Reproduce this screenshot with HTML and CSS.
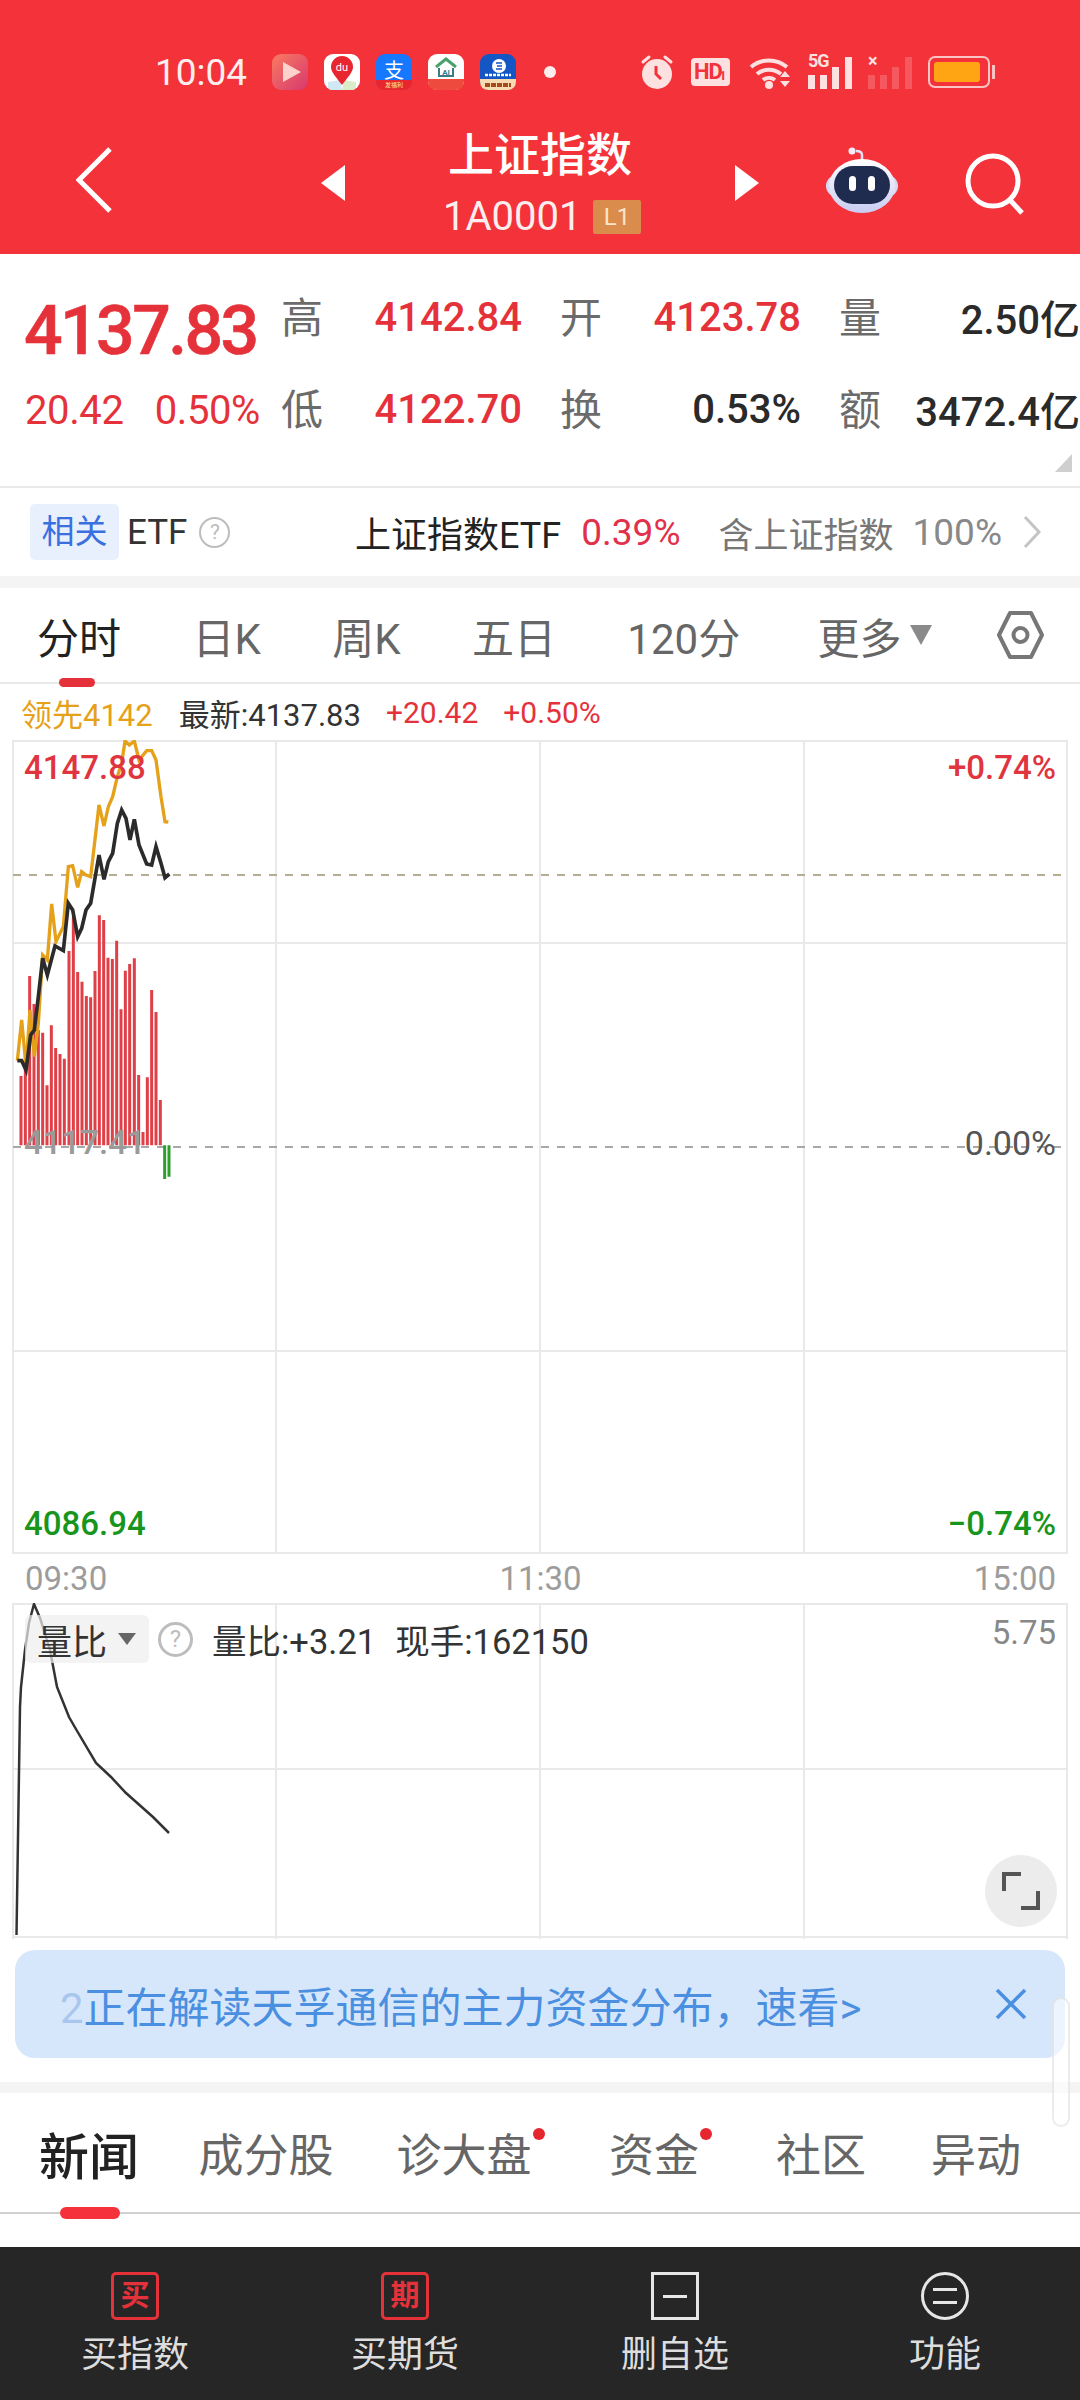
FILE: index.html
```html
<!DOCTYPE html>
<html lang="zh-CN">
<head>
    <meta charset="UTF-8">
    <meta name="viewport" content="width=device-width, initial-scale=1.0">
    <title>上证指数</title>
    <link rel="stylesheet" href="styles.css">
</head>
<body>
<div class="page">
    <header class="top">
        <div class="status">
            <span class="clock">10:04</span>
            <div class="apps">
                <svg width="36" height="36" viewBox="0 0 36 36"><defs><linearGradient id="pl" x1="0" y1="0" x2="1" y2="1"><stop offset="0" stop-color="#f97a62"/><stop offset="1" stop-color="#d8386e"/></linearGradient></defs><rect width="36" height="36" rx="9" fill="url(#pl)"/><path d="M11 8 L29 18 L11 28 Z" fill="#fbd3cc"/></svg>
                <svg width="36" height="36" viewBox="0 0 36 36"><rect width="36" height="36" rx="9" fill="#fff"/><path d="M4 28 L16 26 L18 36 L8 36 Q4 36 4 32 Z" fill="#cfe8f3"/><path d="M32 28 L20 26 L18 36 L28 36 Q32 36 32 32 Z" fill="#d9edc8"/><path d="M18 31 C12 23 7 18 7 13 A11 11 0 0 1 29 13 C29 18 24 23 18 31 Z" fill="#e8262f"/><text x="18" y="17" class="app-du">du</text></svg>
                <svg width="36" height="36" viewBox="0 0 36 36"><rect width="36" height="36" rx="9" fill="#1677ff"/><path d="M0 26 H36 V27 Q36 36 27 36 H9 Q0 36 0 27 Z" fill="#e8262f"/><text x="18" y="24" class="app-zhi">支</text><text x="18" y="33" class="app-tiny">发福利</text></svg>
                <svg width="36" height="36" viewBox="0 0 36 36"><rect width="36" height="36" rx="9" fill="#fff"/><path d="M0 25 H36 V27 Q36 36 27 36 H9 Q0 36 0 27 Z" fill="#ee4a3e"/><path d="M8 13 L18 5 L28 13" fill="none" stroke="#4aa26c" stroke-width="3"/><path d="M11 14 V22 H25 V14" fill="none" stroke="#3a7d88" stroke-width="2"/><text x="18" y="21" class="app-ai">AI</text></svg>
                <svg width="36" height="36" viewBox="0 0 36 36"><rect width="36" height="36" rx="9" fill="#1356c4"/><path d="M0 25 H36 V27 Q36 36 27 36 H9 Q0 36 0 27 Z" fill="#f6dcb0"/><circle cx="19" cy="12" r="7" fill="#fff"/><path d="M16 9 H22 M17 12 H22 M16 15 H22" stroke="#1356c4" stroke-width="1.5"/><path d="M5 21 H31" stroke="#fff" stroke-width="2.5" stroke-dasharray="3 1"/><path d="M5 31 H31" stroke="#a34a20" stroke-width="4" stroke-dasharray="5 1"/></svg>
            </div>
            <span class="note-dot"></span>
            <div class="sys">
                <svg class="sys-alarm" width="34" height="36" viewBox="0 0 34 36"><path d="M3 8 L9 3 M31 8 L25 3" stroke="#fde0e0" stroke-width="3" stroke-linecap="round"/><circle cx="17" cy="20" r="15" fill="#fde0e0"/><path d="M16 12 V20 L21 25" fill="none" stroke="#f4323b" stroke-width="3"/></svg>
                <svg class="sys-hd" width="39" height="28" viewBox="0 0 39 28"><rect width="39" height="28" rx="4" fill="#fde0e0"/><text x="3" y="21" class="sys-hd-text">HD</text><text x="28" y="22" class="sys-hd-sub">1</text></svg>
                <svg class="sys-wifi" width="46" height="34" viewBox="0 0 46 34"><path d="M2 12 A28 28 0 0 1 38 12 M8 19 A19 19 0 0 1 32 19 M14 25 A10 10 0 0 1 26 25" fill="none" stroke="#fde0e0" stroke-width="4"/><circle cx="20" cy="30" r="4" fill="#fde0e0"/><path d="M31 22 L36 16 L41 22 Z M31 26 L41 26 L36 32 Z" fill="#fde0e0"/></svg>
                <div class="sig">
                    <span class="sig-tag">5G</span>
                    <svg width="46" height="34" viewBox="0 0 46 34"><path d="M0 20 h7 v14 h-7 Z M12 20 h7 v14 h-7 Z M24 12 h7 v22 h-7 Z M37 2 h7 v32 h-7 Z" fill="#fde0e0"/></svg>
                </div>
                <div class="sig sig-off">
                    <span class="sig-tag">×</span>
                    <svg width="46" height="34" viewBox="0 0 46 34"><path d="M0 20 h7 v14 h-7 Z M12 20 h7 v14 h-7 Z M24 12 h7 v22 h-7 Z M37 2 h7 v32 h-7 Z" fill="#fde0e0"/></svg>
                </div>
                <div class="battery"><span class="battery-fill"></span></div>
            </div>
        </div>
        <nav class="nav">
            <svg class="nav-back" width="36" height="66" viewBox="0 0 36 66"><path d="M34 2 L3 33 L34 64" fill="none" stroke="#fff" stroke-width="5"/></svg>
            <span class="tri tri-left"></span>
            <div class="nav-title">
                <div class="name">上证指数</div>
                <div class="code">1A0001<span class="level">L1</span></div>
            </div>
            <span class="tri tri-right"></span>
            <svg class="nav-robot" width="72" height="66" viewBox="0 0 72 66"><defs><linearGradient id="rb" x1="0" y1="0" x2="0" y2="1"><stop offset="0" stop-color="#fff"/><stop offset="1" stop-color="#c9ccf2"/></linearGradient></defs><path d="M36 14 V8 Q36 4 30 4" fill="none" stroke="#e6e0f5" stroke-width="2.5"/><circle cx="26" cy="4" r="3.5" fill="#f3eef8"/><rect x="0" y="28" width="72" height="22" rx="11" fill="#d7d9f5"/><ellipse cx="36" cy="39" rx="33" ry="27" fill="url(#rb)"/><rect x="8" y="19" width="56" height="38" rx="19" fill="#1f2c50"/><rect x="23" y="29" width="7" height="15" rx="3.5" fill="#fff"/><rect x="42" y="29" width="7" height="15" rx="3.5" fill="#fff"/></svg>
            <svg class="nav-search" width="62" height="62" viewBox="0 0 62 62"><circle cx="28" cy="28" r="25" fill="none" stroke="#fff" stroke-width="5"/><path d="M45 47 L57 60" stroke="#fff" stroke-width="5"/></svg>
        </nav>
    </header>

    <section class="quote">
        <div class="quote-main">
            <div class="price">4137.83</div>
            <div class="change"><span>20.42</span><span>0.50%</span></div>
        </div>
        <div class="stats">
            <div class="stat"><span class="stat-key">高</span><span class="up">4142.84</span></div>
            <div class="stat"><span class="stat-key">开</span><span class="up">4123.78</span></div>
            <div class="stat"><span class="stat-key">量</span><span>2.50亿</span></div>
            <div class="stat"><span class="stat-key">低</span><span class="up">4122.70</span></div>
            <div class="stat"><span class="stat-key">换</span><span>0.53%</span></div>
            <div class="stat"><span class="stat-key">额</span><span>3472.4亿</span></div>
        </div>
        <span class="corner"></span>
    </section>

    <section class="etf">
        <span class="etf-chip">相关</span>
        <span class="etf-label">ETF</span>
        <span class="help">?</span>
        <span class="etf-name">上证指数ETF</span>
        <span class="etf-pct">0.39%</span>
        <span class="etf-note">含上证指数</span>
        <span class="etf-share">100%</span>
        <svg width="20" height="34" viewBox="0 0 20 34"><path d="M3 2 L17 17 L3 32" fill="none" stroke="#c4c4c4" stroke-width="3"/></svg>
    </section>

    <div class="band"></div>

    <div class="periods">
        <span class="period period-on">分时</span>
        <span class="period">日K</span>
        <span class="period">周K</span>
        <span class="period">五日</span>
        <span class="period">120分</span>
        <span class="period period-more">更多<i class="more-arrow"></i></span>
        <svg width="47" height="50" viewBox="0 0 47 50"><path d="M13 3 H34 L45 25 L34 47 H13 L2 25 Z" fill="none" stroke="#777" stroke-width="4" stroke-linejoin="round"/><circle cx="23.5" cy="25" r="7" fill="none" stroke="#777" stroke-width="4"/></svg>
    </div>

    <div class="legend">
        <span class="legend-lead">领先4142</span>
        <span class="legend-last">最新:4137.83</span>
        <span class="legend-up">+20.42</span>
        <span class="legend-up">+0.50%</span>
    </div>

    <section class="chart">
        <svg class="plot" width="1080" height="814" viewBox="0 0 1080 814">
            <path class="grid" d="M13 1 H1067 M13 203 H1067 M13 611 H1067 M13 813 H1067 M13 0 V814 M276 0 V814 M540 0 V814 M804 0 V814 M1067 0 V814"/>
            <path class="dash-tan" d="M13 135 H1067"/>
            <path class="dash-gray" d="M13 407 H1067"/>
            <g transform="translate(0,-50) scale(.33333)">
                <path class="bars-up" d="M63 1158V1366M76 1130V1366M89 858V1366M102 942V1366M115 1020V1366M128 1028V1366M141 1186V1366M154 1006V1366M167 1074V1366M180 1092V1366M193 1106V1366M207 783V1366M220 680V1366M233 846V1366M246 875V1366M259 918V1366M272 922V1366M285 843V1366M298 676V1366M311 690V1366M324 803V1366M337 807V1366M350 752V1366M363 958V1366M376 842V1366M389 822V1366M403 805V1366M416 1155V1366M429 1326V1366M442 1162V1366M455 900V1366M468 966V1366M481 1230V1366"/>
                <path class="bars-down" d="M494 1366V1467M507 1366V1460"/>
                <polyline class="line-lead" points="52,1112 65,990 78,1130 90,960 103,1100 115,1000 128,795 142,810 155,642 168,755 190,710 205,530 218,527 233,592 245,545 258,555 272,560 297,345 312,408 325,350 338,320 352,260 365,220 375,153 388,165 403,153 417,210 440,182 455,182 468,210 483,320 495,395 505,396"/>
                <polyline class="line-last" points="52,1112 65,1112 78,1140 92,1035 103,1020 115,920 128,805 142,855 165,768 190,782 205,640 218,660 233,740 245,715 258,660 272,640 297,495 312,568 325,515 338,490 352,400 365,360 378,385 390,450 403,388 417,465 440,522 455,525 468,470 483,520 495,563 508,552"/>
            </g>
        </svg>
        <span class="tick tick-high">4147.88</span>
        <span class="tick tick-high-pct">+0.74%</span>
        <span class="tick tick-mid">4117.41</span>
        <span class="tick tick-mid-pct">0.00%</span>
        <span class="tick tick-low">4086.94</span>
        <span class="tick tick-low-pct">−0.74%</span>
    </section>

    <div class="times"><span>09:30</span><span>11:30</span><span>15:00</span></div>

    <section class="volume">
        <svg class="plot" width="1080" height="336" viewBox="0 0 1080 336">
            <path class="grid" d="M13 1 H1067 M13 166 H1067 M13 334 H1067 M13 0 V336 M276 0 V336 M540 0 V336 M804 0 V336 M1067 0 V336"/>
            <polyline class="line-ratio" points="16.5,332 20,104 21,84 25,47 29,20 34,1 40,15 50,47 57,84 69,114 76.5,127 96,160 111,174 126,190 153,214 169,230"/>
        </svg>
        <div class="vol-head">
            <span class="vol-chip">量比<i class="chip-arrow"></i></span>
            <span class="help help-big">?</span>
            <span class="vol-text">量比:+3.21</span>
            <span class="vol-text">现手:162150</span>
        </div>
        <span class="vol-max">5.75</span>
        <span class="expand">
            <svg width="40" height="40" viewBox="0 0 40 40"><path d="M3 20 V3 H20 M20 37 H37 V20" fill="none" stroke="#555" stroke-width="4"/></svg>
        </span>
    </section>

    <div class="tip">
        <div class="tip-text"><span class="tip-num">2</span>正在解读天孚通信的主力资金分布，速看&gt;</div>
        <svg width="32" height="32" viewBox="0 0 32 32"><path d="M2 2 L30 30 M30 2 L2 30" stroke="#4a8fe0" stroke-width="3.5"/></svg>
    </div>

    <div class="band band-low"></div>

    <div class="news-tabs">
        <span class="news-tab news-on">新闻</span>
        <span class="news-tab">成分股</span>
        <span class="news-tab"><span class="has-dot">诊大盘</span></span>
        <span class="news-tab"><span class="has-dot">资金</span></span>
        <span class="news-tab">社区</span>
        <span class="news-tab">异动</span>
    </div>

    <div class="empty"></div>

    <footer class="actions">
        <div class="action"><span class="act-box act-red">买</span><span class="act-label">买指数</span></div>
        <div class="action"><span class="act-box act-red">期</span><span class="act-label">买期货</span></div>
        <div class="action"><span class="act-box act-white"><i class="minus"></i></span><span class="act-label">删自选</span></div>
        <div class="action"><span class="act-box act-round"><i class="minus"></i><i class="minus"></i></span><span class="act-label">功能</span></div>
    </footer>

    <div class="scroll-thumb"></div>
</div>
</body>
</html>
```

FILE: styles.css
```css
* {
    box-sizing: border-box;
}

body {
    margin: 0;
    background: #fff;
    font-family: 'Roboto', 'Noto Sans CJK SC', sans-serif;
    color: #222;
}

.page {
    position: relative;
    width: 1080px;
    height: 2400px;
    overflow: hidden;
    background: #fff;
}

/* header */
.top {
    height: 254px;
    background: #f3323a;
    color: #fff;
}

.status {
    height: 104px;
    padding: 40px 0 0 155px;
    display: flex;
    align-items: center;
}

.clock {
    width: 117px;
    font-size: 37px;
    color: #fdeeee;
}

.apps {
    display: flex;
    gap: 16px;
}

.app-du {
    font: 11px 'Roboto', sans-serif;
    fill: #fff;
    text-anchor: middle;
}

.app-zhi {
    font: 20px 'Noto Sans CJK SC', sans-serif;
    fill: #fff;
    text-anchor: middle;
}

.app-tiny {
    font: 6px 'Noto Sans CJK SC', sans-serif;
    fill: #fde68a;
    text-anchor: middle;
}

.app-ai {
    font: bold 8px 'Roboto', sans-serif;
    fill: #3a7d88;
    text-anchor: middle;
}

.note-dot {
    width: 12px;
    height: 12px;
    margin-left: 28px;
    border-radius: 50%;
    background: #fdeeee;
}

.sys {
    display: flex;
    align-items: center;
    margin-left: 84px;
}

.sys-alarm {
    margin-right: 17px;
}

.sys-hd {
    margin-right: 19px;
}

.sys-hd-text {
    font: bold 22px 'Roboto', sans-serif;
    fill: #f3323a;
    letter-spacing: -1px;
}

.sys-hd-sub {
    font: bold 13px 'Roboto', sans-serif;
    fill: #f3323a;
}

.sys-wifi {
    margin-right: 13px;
}

.sig {
    position: relative;
    width: 46px;
    height: 34px;
    margin-right: 14px;
}

.sig svg {
    display: block;
}

.sig-tag {
    position: absolute;
    left: 0;
    top: -3px;
    font-size: 18px;
    font-weight: 700;
    line-height: 18px;
    letter-spacing: -1px;
    color: #fde0e0;
    background: #f3323a;
    padding-right: 2px;
}

.sig-off svg {
    opacity: .22;
}

.battery {
    position: relative;
    width: 62px;
    height: 32px;
    padding: 4px;
    border: 2px solid #fbc4c4;
    border-radius: 7px;
}

.battery::after {
    content: "";
    position: absolute;
    right: -7px;
    top: 7px;
    width: 3px;
    height: 14px;
    background: #fbc4c4;
}

.battery-fill {
    display: block;
    width: 46px;
    height: 100%;
    background: #ffa412;
    border-radius: 3px;
}

.nav {
    height: 144px;
    padding-left: 76px;
    display: flex;
    align-items: center;
}

.nav-back {
    margin-top: 8px;
}

.tri {
    width: 0;
    height: 0;
    margin-top: 14px;
    border-top: 18px solid transparent;
    border-bottom: 18px solid transparent;
}

.tri-left {
    margin-left: 209px;
    border-right: 24px solid #fff;
}

.tri-right {
    margin-left: 94px;
    border-left: 24px solid #fff;
}

.nav-title {
    width: 195px;
    margin-left: 101px;
    margin-top: 12px;
}

.name {
    font-size: 46px;
    line-height: 62px;
    text-align: center;
    font-weight: 500;
    margin-left: -7px;
}

.code {
    display: flex;
    align-items: center;
    justify-content: space-between;
    margin-top: 8px;
    margin-left: -3px;
    font-size: 40px;
    line-height: 46px;
    color: #fdeeee;
}

.level {
    width: 48px;
    height: 34px;
    background: #d98c4b;
    color: #fbe3cc;
    font-size: 24px;
    line-height: 34px;
    text-align: center;
    border-radius: 2px;
}

.nav-robot {
    margin-left: 67px;
    margin-top: 8px;
}

.nav-search {
    margin-left: 67px;
    margin-top: 16px;
}

/* quote */
.quote {
    position: relative;
    height: 232px;
    padding: 40px 0 0 25px;
    display: flex;
    align-items: flex-start;
}

.quote-main {
    width: 256px;
}

.price {
    font-size: 68px;
    line-height: 74px;
    font-weight: 500;
    color: #e5323a;
    letter-spacing: -2.6px;
    margin-left: -1px;
    -webkit-text-stroke: .6px #e5323a;
}

.change {
    display: flex;
    justify-content: space-between;
    width: 235px;
    margin-top: 17px;
    font-size: 40px;
    line-height: 52px;
    color: #e5323a;
    letter-spacing: -.4px;
}

.stats {
    display: grid;
    grid-template-columns: repeat(3, 241px);
    column-gap: 38px;
    row-gap: 36px;
    margin-top: -5px;
}

.stat {
    display: flex;
    justify-content: space-between;
    align-items: center;
    height: 56px;
    font-size: 40px;
    font-weight: 500;
    color: #2a2a2a;
}

.stat-key {
    margin-top: -5px;
    font-size: 42px;
    font-weight: 400;
    color: #6b6b6b;
}

.up {
    color: #e5323a;
}

.corner {
    position: absolute;
    right: 8px;
    bottom: 14px;
    width: 0;
    height: 0;
    border-left: 17px solid transparent;
    border-bottom: 18px solid #cfcfcf;
}

/* etf row */
.etf {
    height: 90px;
    border-top: 2px solid #e9e9e9;
    padding: 0 38px 0 30px;
    display: flex;
    align-items: center;
    font-size: 35px;
}

.etf-chip {
    width: 89px;
    height: 56px;
    line-height: 56px;
    text-align: center;
    border-radius: 5px;
    background: #e8f0fd;
    color: #3a6fe0;
    font-size: 33px;
}

.etf-label {
    margin-left: 8px;
    color: #333;
}

.help {
    width: 31px;
    height: 31px;
    margin-left: 12px;
    border: 2px solid #bdbdbd;
    border-radius: 50%;
    color: #bdbdbd;
    font-size: 21px;
    line-height: 27px;
    text-align: center;
}

.etf-name {
    margin-left: auto;
    font-size: 36px;
    color: #222;
}

.etf-pct {
    margin-left: 20px;
    font-size: 37px;
    color: #e2304a;
}

.etf-note {
    margin-left: 38px;
    color: #777;
}

.etf-share {
    margin-left: 19px;
    margin-right: 20px;
    font-size: 37px;
    color: #888;
}

.band {
    height: 12px;
    background: #f4f4f4;
}

.band-low {
    height: 11px;
    margin-top: 24px;
}

/* period tabs */
.periods {
    height: 96px;
    padding: 0 36px 0 37px;
    border-bottom: 2px solid #e9e9e9;
    display: flex;
    justify-content: space-between;
    align-items: center;
    font-size: 42px;
    color: #666;
}

.period {
    position: relative;
    display: flex;
    align-items: center;
}

.period-on {
    color: #222;
}

.period-on::after {
    content: "";
    position: absolute;
    left: 22px;
    bottom: -21px;
    width: 36px;
    height: 9px;
    border-radius: 5px;
    background: #e5323a;
}

.period-more {
    margin-left: 6px;
    margin-right: -6px;
}

.more-arrow {
    width: 0;
    height: 0;
    margin-left: 8px;
    border-left: 11px solid transparent;
    border-right: 11px solid transparent;
    border-top: 20px solid #8a8a8a;
}

.legend {
    height: 56px;
    padding-left: 21px;
    display: flex;
    align-items: center;
    font-size: 31px;
}

.legend-lead {
    color: #e5a11a;
}

.legend-last {
    margin-left: 26px;
    color: #333;
}

.legend-up {
    margin-left: 25px;
    font-size: 30px;
    color: #e5323a;
}

/* chart */
.chart {
    position: relative;
    height: 814px;
}

.plot {
    display: block;
}

.grid {
    fill: none;
    stroke: #e9e9e9;
    stroke-width: 2;
}

.dash-tan {
    stroke: #b7ad90;
    stroke-width: 2;
    stroke-dasharray: 8 8;
}

.dash-gray {
    stroke: #a8a8a8;
    stroke-width: 2;
    stroke-dasharray: 8 8;
}

.bars-up {
    fill: none;
    stroke: #df3f46;
    stroke-width: 9;
}

.bars-down {
    fill: none;
    stroke: #2f9e2f;
    stroke-width: 9;
}

.line-lead {
    fill: none;
    stroke: #e5a11a;
    stroke-width: 10;
}

.line-last {
    fill: none;
    stroke: #2b2b2b;
    stroke-width: 11;
}

.line-ratio {
    fill: none;
    stroke: #333;
    stroke-width: 2.5;
}

.tick {
    position: absolute;
    font-size: 33px;
    line-height: 40px;
}

.tick-high {
    left: 24px;
    top: 8px;
    color: #e0353f;
    font-weight: 500;
}

.tick-high-pct {
    right: 24px;
    top: 8px;
    color: #e0353f;
    font-weight: 500;
}

.tick-mid {
    left: 24px;
    top: 383px;
    color: #9a9a9a;
    font-weight: 500;
}

.tick-mid-pct {
    right: 24px;
    top: 383px;
    font-size: 34px;
    color: #555;
}

.tick-low {
    left: 24px;
    top: 764px;
    color: #18951c;
    font-weight: 500;
}

.tick-low-pct {
    right: 24px;
    top: 764px;
    color: #18951c;
    font-weight: 500;
}

.times {
    height: 49px;
    padding: 0 24px 0 25px;
    display: flex;
    justify-content: space-between;
    align-items: center;
    font-size: 33px;
    color: #9c9c9c;
}

/* volume ratio */
.volume {
    position: relative;
    height: 336px;
}

.vol-head {
    position: absolute;
    left: 25px;
    top: 11px;
    display: flex;
    align-items: center;
}

.vol-chip {
    width: 124px;
    height: 48px;
    padding-left: 12px;
    display: flex;
    align-items: center;
    border-radius: 6px;
    background: rgba(238, 238, 238, .7);
    font-size: 35px;
    color: #333;
}

.chip-arrow {
    width: 0;
    height: 0;
    margin-left: 11px;
    border-left: 9px solid transparent;
    border-right: 9px solid transparent;
    border-top: 12px solid #666;
}

.help-big {
    width: 35px;
    height: 35px;
    margin-left: 9px;
    border-width: 3px;
    font-size: 24px;
    line-height: 29px;
}

.vol-text {
    margin-left: 19px;
    font-size: 34.5px;
    color: #333;
}

.vol-max {
    position: absolute;
    right: 24px;
    top: 10px;
    font-size: 33px;
    color: #888;
}

.expand {
    position: absolute;
    left: 985px;
    top: 252px;
    width: 72px;
    height: 72px;
    border-radius: 50%;
    background: #ececec;
    display: flex;
    align-items: center;
    justify-content: center;
}

/* tip banner */
.tip {
    height: 108px;
    margin: 11px 15px 0;
    padding: 0 38px 0 45px;
    border-radius: 20px;
    background: #d7e7fb;
    display: flex;
    align-items: center;
    justify-content: space-between;
}

.tip-text {
    font-size: 42px;
    color: #4a8fe0;
}

.tip-num {
    color: #a9c7ee;
}

/* news tabs */
.news-tabs {
    height: 121px;
    border-bottom: 2px solid #d0d0d0;
    display: grid;
    grid-template-columns: 178px 176px 220px 160px 174px 136px;
    align-items: center;
    text-align: center;
    font-size: 45px;
    color: #666;
}

.news-tab {
    position: relative;
}

.news-on {
    font-size: 50px;
    font-weight: 500;
    color: #222;
}

.news-on::after {
    content: "";
    position: absolute;
    left: 60px;
    bottom: -30px;
    width: 60px;
    height: 12px;
    border-radius: 6px;
    background: #f5323c;
}

.has-dot {
    position: relative;
}

.has-dot::after {
    content: "";
    position: absolute;
    right: -13px;
    top: -2px;
    width: 12px;
    height: 12px;
    border-radius: 50%;
    background: #e5262f;
}

.empty {
    height: 33px;
}

/* bottom actions */
.actions {
    height: 153px;
    background: #262626;
    display: grid;
    grid-template-columns: repeat(4, 270px);
}

.action {
    padding-top: 25px;
    display: flex;
    flex-direction: column;
    align-items: center;
}

.act-box {
    width: 48px;
    height: 48px;
    display: flex;
    flex-direction: column;
    gap: 10px;
    align-items: center;
    justify-content: center;
}

.act-red {
    border: 3px solid #e5323a;
    border-radius: 5px;
    color: #e5323a;
    font-size: 29px;
    font-weight: 700;
    line-height: 1;
}

.act-white {
    border: 3px solid #e6e6e6;
}

.act-round {
    border: 3px solid #e6e6e6;
    border-radius: 50%;
}

.minus {
    width: 24px;
    height: 3px;
    background: #e6e6e6;
}

.act-label {
    margin-top: 10px;
    font-size: 36px;
    line-height: 50px;
    color: #ddd;
}

.scroll-thumb {
    position: absolute;
    left: 1052px;
    top: 1997px;
    width: 18px;
    height: 130px;
    border: 2px solid rgba(200, 200, 200, .35);
    border-radius: 9px;
    background: rgba(255, 255, 255, .55);
}
```
